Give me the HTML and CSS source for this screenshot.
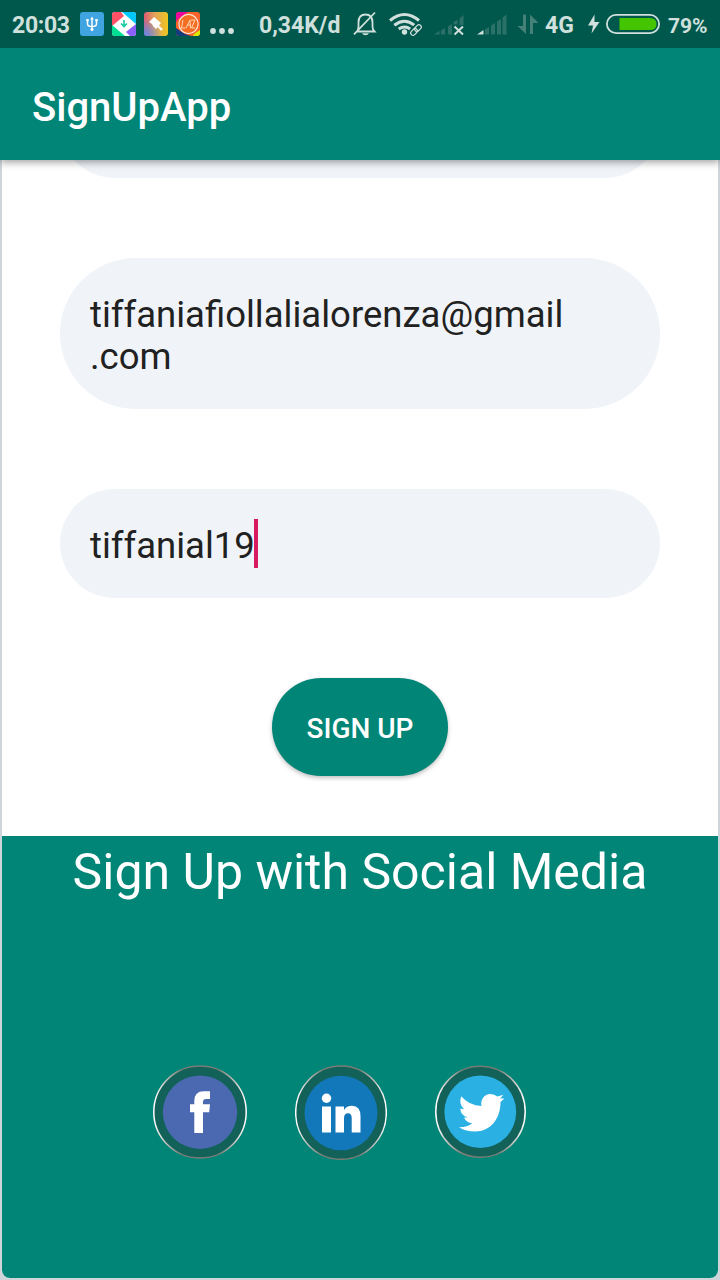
FILE: index.html
```html
<!DOCTYPE html>
<html lang="en">
<head>
<meta charset="utf-8">
<title>SignUpApp</title>
<link rel="stylesheet" href="styles.css">
</head>
<body>
<header class="status">
  <span class="clock">20:03</span>
  <svg class="notices" width="120" height="24" viewBox="80 12 120 24">
    <defs>
      <linearGradient id="clean" x1="0" x2="1" y1="0" y2="0"><stop offset="0" stop-color="#db5a72"/><stop offset=".45" stop-color="#e3a45a"/><stop offset="1" stop-color="#eec61f"/></linearGradient>
      <radialGradient id="blue" cx="0" cy="1" r=".75"><stop offset="0" stop-color="#5a8df0"/><stop offset="1" stop-color="#5a8df0" stop-opacity="0"/></radialGradient>
      <clipPath id="tiles"><rect x="112" y="12" width="24" height="24" rx="3"/><rect x="176" y="12" width="24" height="24" rx="3"/></clipPath>
    </defs>
    <rect x="80" y="12" width="24" height="24" rx="3" fill="#3fa4df"/>
    <path d="M92 18v12M87.500 20v4q0 2.500 4.500 2.500t4.500-2.500v-4" fill="none" stroke="#fff" stroke-width="1.500"/>
    <path d="M92 16.500l-1.800 3h3.600zM86.300 19h2.400v2.200h-2.400zM95.300 19h2.400v2.200h-2.400z" fill="#fff"/><circle cx="92" cy="29.500" r="1.500" fill="#fff"/>
    <g clip-path="url(#tiles)">
      <path d="M112 12h24v24h-24z" fill="#fff"/>
      <path d="M112 12h9l3 4-12 10z" fill="#ff5065"/><path d="M122 12h14v12z" fill="#00c8ff"/><path d="M136 24v12h-6l-4-4z" fill="#8b60ff"/><path d="M112 25l13 11h-13z" fill="#00df94"/>
      <path d="M124 20v6M121 23.500l3 3 3-3" fill="none" stroke="#18c9a0" stroke-width="1.600"/>
      <path d="M176 12h24v24h-24z" fill="#f9622b"/><path d="M176 12h12l-10 7-2 3z" fill="#ed079c"/><path d="M176 28l9 6 6 2h-15z" fill="#123c7b"/><path d="M194 34l6-4v6h-7z" fill="#d8ed00"/>
      <circle cx="188.500" cy="24" r="9.600" fill="#f36d22" stroke="#ffe3d1" stroke-width="1.200"/>
      <path d="M183 20l-1.500 8h4M186 28l4-8 .5 8M187.500 25h3M191 20h4l-3.500 8h3.500" fill="none" stroke="#ffd8b5" stroke-width="1"/>
    </g>
    <rect x="144" y="12" width="24" height="24" rx="3" fill="url(#clean)"/><rect x="144" y="12" width="24" height="24" rx="3" fill="url(#blue)"/>
    <path d="M149 22l5-5 7 6-5 6-3-3-1-2z" fill="#fff"/><path d="M157 25l5 5" stroke="#fff" stroke-width="2.400"/>
  </svg>
  <svg class="more" width="24" height="8" viewBox="0 0 24 8"><g fill="#cfe0dd"><circle cx="3" cy="4" r="2.900"/><circle cx="12" cy="4" r="2.900"/><circle cx="21" cy="4" r="2.900"/></g></svg>
  <span class="speed">0,34K/d</span>
  <svg class="signals" width="188" height="28" viewBox="352 10 188 28">
    <g fill="none" stroke="#cfe0dd" stroke-width="1.800">
      <path d="M357 31.500h17.500q-2-2-2-5v-4c0-5-2.500-8-7-8s-7 3-7 8v4q0 3-1.500 5M354 34.300L375 12.500"/>
    </g>
    <path d="M362 33.200h7q-1 2-3.500 2t-3.500-2z" fill="#cfe0dd"/>
    <g fill="none" stroke="#cfe0dd" stroke-width="3"><path d="M390 20.500q14.500-12 29 0M394.300 25.200q10.200-8 20 0M398.700 29q6-4 11.500 0"/></g>
    <circle cx="404.500" cy="32" r="2.700" fill="#cfe0dd"/>
    <g transform="rotate(-45 416 30)" fill="none" stroke="#00574b" stroke-width="4"><rect x="410" y="27.500" width="12" height="5" rx="2.500"/></g>
    <g transform="rotate(-45 416 30)" fill="none" stroke="#cfe0dd" stroke-width="1.200"><rect x="409.500" y="27.700" width="7.500" height="4.600" rx="2.300"/><rect x="415" y="27.700" width="7.500" height="4.600" rx="2.300"/></g>
    <g fill="#2b7168"><path d="M434 34.500l5.500-3.500v3.500zM441 30.500l4-2.500v6.500h-4zM448 26.500l4-2.500v10.500h-4zM453.500 22l4-2.500v5h-4zM459.500 18.500l4-3.500v10h-4z"/>
      <path d="M485 29.500l4-2.500v7.500h-4zM491 25.500l4-2.500v11.500h-4zM497 21.500l4-2.500v15.500h-4zM502.500 17.500l4-3v20h-4z"/></g>
    <path d="M454.500 26.500l8.500 8M463 26.500l-8.500 8" stroke="#cfe0dd" stroke-width="2"/>
    <path d="M477 34.500l6.500-4.500v4.500z" fill="#cfe0dd"/>
    <path d="M523 14.500h3v19.500l-8.500-8h5.500zM530 34V14.500l8.500 8.500H533V34z" fill="#468179"/>
  </svg>
  <span class="network">4G</span>
  <svg class="battery" width="74" height="24" viewBox="586 12 74 24">
    <path d="M594.500 14.500L588 25.500h5l-1.500 8 8-11.500h-5z" fill="#cfe0dd"/>
    <rect x="606.900" y="14.900" width="52.200" height="18.200" rx="9.100" fill="none" stroke="#cfe0dd" stroke-width="1.800"/>
    <path d="M619.500 18H650q6.500 0 6.500 6t-6.500 6h-30.500z" fill="#45c400"/>
  </svg>
  <span class="percent">79%</span>
</header>
<div class="appbar"><h1 class="title">SignUpApp</h1></div>
<main class="page">
  <section class="form">
    <div class="field clipped"></div>
    <div class="field email">tiffaniafiollalialorenza@gmail<br>.com</div>
    <div class="field password">tiffanial19<i class="caret"></i></div>
    <button class="signup" type="button">SIGN UP</button>
  </section>
  <section class="social">
    <h2 class="social-title">Sign Up with Social Media</h2>
    <div class="links">
      <svg width="94" height="96" viewBox="153 1064 94 96">
        <defs><linearGradient id="rim"><stop offset="0" stop-color="#fff"/><stop offset=".12" stop-color="#c9c8c5"/><stop offset=".3" stop-color="#777b74"/><stop offset=".7" stop-color="#777b74"/><stop offset=".88" stop-color="#c9c8c5"/><stop offset="1" stop-color="#fff"/></linearGradient></defs>
        <ellipse cx="200" cy="1112" rx="46.200" ry="46" fill="#12625a" stroke="url(#rim)" stroke-width="1.500"/>
        <ellipse cx="200" cy="1112.200" rx="37.200" ry="36.700" fill="#4b69b1"/>
        <path d="M194.300 1133v-20.800H190v-8h4.300v-3.200q0-9.800 9.500-9.800h6.200v7.800h-4q-3 0-3 3v2.200h7l-.8 8H203v20.800z" fill="#fff"/>
      </svg>
      <svg width="92" height="96" viewBox="295 1064 92 96">
        <ellipse cx="341" cy="1112.700" rx="45.300" ry="46.600" fill="#12625a" stroke="url(#rim)" stroke-width="1.500"/>
        <ellipse cx="341" cy="1113" rx="36.500" ry="37.300" fill="#1378b9"/>
        <path d="M322 1106.500h9v26h-9zM335.500 1106.500h8.500v3.500q2.700-4.200 8-4.200 8.500 0 8.500 10.500v16.200h-8.800V1118q0-4.700-3.700-4.700-4 0-4 5v14.200h-8.500z" fill="#fff"/><circle cx="326.500" cy="1098.300" r="4.700" fill="#fff"/>
      </svg>
      <svg width="91" height="96" viewBox="435 1064 91 96">
        <ellipse cx="480.500" cy="1111.700" rx="44.700" ry="45.500" fill="#12625a" stroke="url(#rim)" stroke-width="1.500"/>
        <ellipse cx="480.300" cy="1111.800" rx="35.900" ry="36.200" fill="#2bb0e3"/>
        <path d="M461.200 1096.300q8 9.400 20.200 9.600c-1-6.500 3-11.800 9-11.800q4.200 0 7 2.500l6-1.800-3.200 3.800 4.200-.2-3.900 3.700c0 17-10 29.500-25.500 29.500q-9 0-16-4.300 8 .2 13.300-4.100-6.200-.8-8.300-5.800h3.500q-7-2.400-7.200-9l3.700.8q-5.600-5-2.800-12.900z" fill="#fff"/>
      </svg>
    </div>
  </section>
</main>
</body>
</html>
```
FILE: styles.css
```css
* { box-sizing: border-box; }
body {
  margin: 0;
  height: 1280px;
  display: flex;
  flex-direction: column;
  overflow: hidden;
  background: #cfd5da;
  font-family: Roboto, "Liberation Sans", sans-serif;
}
.status {
  height: 48px;
  flex: none;
  display: flex;
  align-items: center;
  padding-left: 12px;
  background: #00574b;
  color: #cfe0dd;
  font-size: 23px;
  font-weight: 700;
  line-height: 28px;
  white-space: nowrap;
}
.status svg, .status span { flex: none; }
.clock { width: 68px; padding-top: 4px; letter-spacing: -.3px; }
.more { margin: 14px 0 0 10px; }
.speed { width: 93px; margin-left: 25px; padding-top: 4px; }
.network { width: 41px; margin-left: 5px; padding-top: 4px; }
.percent { padding-top: 3px; margin-left: 8px; font-size: 21px; }
.appbar {
  height: 112px;
  flex: none;
  display: flex;
  align-items: center;
  padding: 6px 32px 0;
  background: #008577;
  box-shadow: 0 2px 8px rgba(0, 0, 0, .4);
  clip-path: inset(0 0 -20px);
  z-index: 1;
}
.title { margin: 0; color: #fff; font-size: 40px; font-weight: 500; }
.page {
  flex: 1;
  margin: 0 2px 2px;
  display: flex;
  flex-direction: column;
  background: #fff;
  overflow: hidden;
  border-radius: 0 0 8px 8px;
}
.form {
  height: 676px;
  flex: none;
  padding: 0 58px;
  display: flex;
  flex-direction: column;
  align-items: center;
  gap: 80px;
}
.field {
  width: 100%;
  height: 109px;
  flex: none;
  padding: 36px 30px 0;
  border-radius: 76px;
  background: #f0f4f8;
  color: #212121;
  font-size: 36.5px;
  line-height: 42px;
  white-space: nowrap;
}
.clipped { margin-top: -91px; }
.email { height: 151px; }
.password { display: flex; padding-top: 30px; line-height: 54px; }
.caret { width: 4px; height: 49px; margin-left: -1px; background: #d81b60; }
.signup {
  width: 176px;
  height: 98px;
  flex: none;
  border: 0;
  padding: 3px 0 0;
  border-radius: 49px;
  background: #008577;
  color: #fff;
  box-shadow: 0 2px 4px rgba(0, 0, 0, .25);
  font: 500 28px Roboto, sans-serif;
}
.social { flex: 1; background: #008577; }
.social-title {
  margin: 0;
  padding-top: 7px;
  color: #fff;
  font-size: 50px;
  font-weight: 400;
  line-height: 59px;
  text-align: center;
  white-space: nowrap;
}
.links { display: flex; gap: 48px; padding: 162px 0 0 151px; }
```
